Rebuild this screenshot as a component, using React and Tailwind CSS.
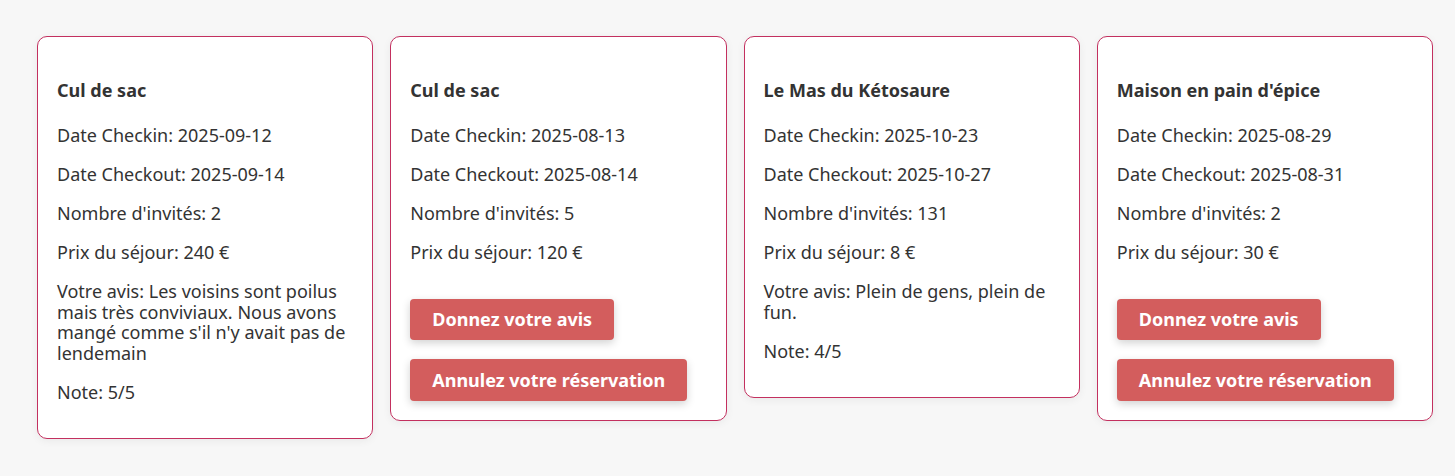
import React from "react";

const cards = [
  {
    title: "Cul de sac",
    checkin: "2025-09-12",
    checkout: "2025-09-14",
    guests: 2,
    price: "240 €",
    review: "Les voisins sont poilus mais très conviviaux. Nous avons mangé comme s'il n'y avait pas de lendemain",
    note: "5/5",
  },
  {
    title: "Cul de sac",
    checkin: "2025-08-13",
    checkout: "2025-08-14",
    guests: 5,
    price: "120 €",
    buttons: true,
  },
  {
    title: "Le Mas du Kétosaure",
    checkin: "2025-10-23",
    checkout: "2025-10-27",
    guests: 131,
    price: "8 €",
    review: "Plein de gens, plein de fun.",
    note: "4/5",
  },
  {
    title: "Maison en pain d'épice",
    checkin: "2025-08-29",
    checkout: "2025-08-31",
    guests: 2,
    price: "30 €",
    buttons: true,
  },
];

function Card({ c }) {
  return (
    <div className="flex-1 min-w-0 bg-white border border-[#c3305f] rounded-[10px] px-[19px] pt-[43px] pb-[19px] shadow-[0_2px_8px_rgba(0,0,0,0.06)]">
      <h3 className="font-bold text-[18px] leading-[21px] mb-[24px]">{c.title}</h3>
      <p className="leading-[20.5px] mb-[18.5px]">Date Checkin: {c.checkin}</p>
      <p className="leading-[20.5px] mb-[18.5px]">Date Checkout: {c.checkout}</p>
      <p className="leading-[20.5px] mb-[18.5px]">Nombre d'invités: {c.guests}</p>
      <p className="leading-[20.5px] mb-[18.5px]">Prix du séjour: {c.price}</p>
      {c.review && (
        <p className="leading-[20.5px] mb-[18.5px]">Votre avis: {c.review}</p>
      )}
      {c.note && <p className="leading-[20.5px] mb-[17px]">Note: {c.note}</p>}
      {c.buttons && (
        <div className="flex flex-col items-start gap-[19px] pt-[18px]">
          <button className="h-[41px] px-[22px] rounded-[4px] bg-[#d35d5d] text-white font-bold text-[18px] shadow-[0_3px_8px_rgba(0,0,0,0.18)]">
            Donnez votre avis
          </button>
          <button className="h-[42px] px-[22px] rounded-[4px] bg-[#d35d5d] text-white font-bold text-[18px] shadow-[0_3px_8px_rgba(0,0,0,0.18)]">
            Annulez votre réservation
          </button>
        </div>
      )}
    </div>
  );
}

export default function App() {
  return (
    <div
      className="min-h-[476px] bg-[#f7f7f7] text-[#333333] text-[18px]"
      style={{ fontFamily: '"Noto Sans", "Open Sans", sans-serif' }}
    >
      <div className="flex items-start gap-[17px] pl-[37px] pr-[22px] pt-[36px]">
        {cards.map((c, i) => (
          <Card key={i} c={c} />
        ))}
      </div>
    </div>
  );
}
